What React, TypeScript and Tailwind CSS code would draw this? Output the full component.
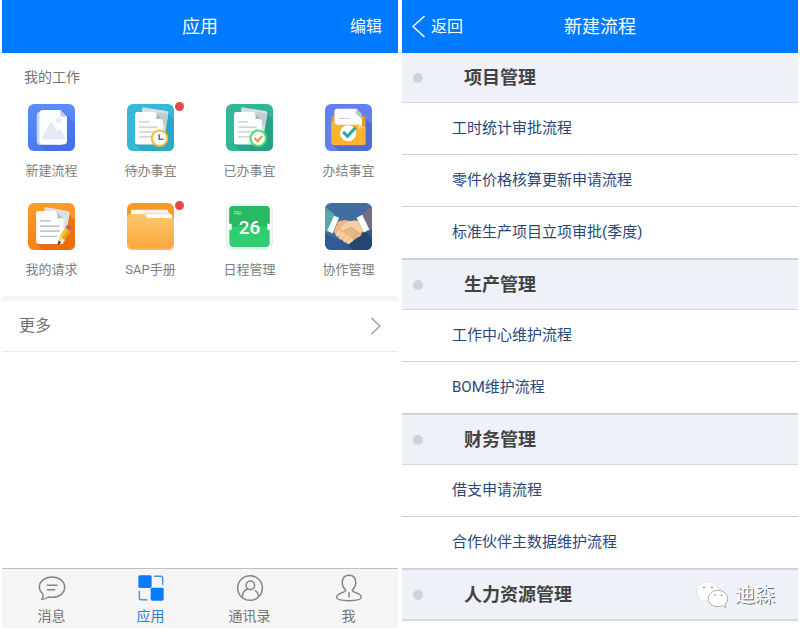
import React from 'react';

type IconProps = { children: React.ReactNode };

function Tile({ children }: IconProps) {
  return (
    <svg viewBox="0 0 140 140" className="size-[47px]" aria-hidden="true">
      {children}
    </svg>
  );
}

function NewFlowIcon() {
  return (
    <Tile>
      <defs>
        <linearGradient id="blueTile" x1="0" y1="0" x2="0" y2="1">
          <stop offset="0" stopColor="#5c8dfb" />
          <stop offset="1" stopColor="#4b76f2" />
        </linearGradient>
      </defs>
      <rect width="140" height="140" rx="18" fill="url(#blueTile)" />
      <path d="M100 20L140 58V122Q140 140 122 140H50L30 120Z" fill="#3f66de" opacity=".45" />
      <rect x="26" y="24" width="82" height="98" rx="10" fill="#c8d7fc" />
      <path d="M44 18H96L116 38V110Q116 120 106 120H44Q34 120 34 110V28Q34 18 44 18Z" fill="#fdfeff" />
      <path d="M96 18L116 38H102Q96 38 96 30Z" fill="#b9cbf8" />
      <circle cx="91" cy="49" r="8" fill="#e6ecf6" />
      <path d="M39 105L64 59Q68 53 73 59L87 82L92 76Q95 73 98 77L112 105Z" fill="#e4eaf3" />
    </Tile>
  );
}

function Papers() {
  return (
    <>
      <path d="M46 10L118 21Q124 23 123 29L109 114Q108 119 102 118L36 108Z" fill="#d8dfe4" />
      <path d="M90 24L122 29L116 66L109 60Z" fill="#c3ccd1" />
      <path d="M31 24H84L107 48V115Q107 121 101 121H31Q24 121 24 114V31Q24 24 31 24Z" fill="#fcfdfd" />
      <path d="M84 24Q91 33 87 45Q99 42 107 48Z" fill="#a8b1b5" />
      <path d="M36 53H66M36 69H91M36 83H91M36 98H76" stroke="#c2cacf" strokeWidth="3.5" />
    </>
  );
}

function TodoIcon() {
  return (
    <Tile>
      <rect width="140" height="140" rx="18" fill="#36b9d5" />
      <path d="M118 24L140 46V122Q140 140 122 140H44L24 120Z" fill="#249cb7" opacity=".6" />
      <Papers />
      <circle cx="97" cy="102" r="23" fill="#fff" stroke="#f5bb37" strokeWidth="6" />
      <path d="M96 90V105H109" fill="none" stroke="#6b7379" strokeWidth="5" />
    </Tile>
  );
}

function DoneIcon() {
  return (
    <Tile>
      <rect width="140" height="140" rx="18" fill="#31b797" />
      <path d="M118 24L140 46V122Q140 140 122 140H44L24 120Z" fill="#20957b" opacity=".6" />
      <Papers />
      <circle cx="96" cy="102" r="23" fill="#fff" stroke="#4bdd70" strokeWidth="6" />
      <path d="M85 101L94 111L108 95" fill="none" stroke="#f28a37" strokeWidth="5.5" />
    </Tile>
  );
}

function ClosedIcon() {
  return (
    <Tile>
      <rect width="140" height="140" rx="18" fill="#647ff2" />
      <path d="M109 30L140 62V122Q140 140 122 140H42L22 121Z" fill="#4461c5" opacity=".65" />
      <rect x="19" y="36" width="102" height="48" rx="7" fill="#e99b20" />
      <path d="M37 14H94L110 31V80H28V23Q28 14 37 14Z" fill="#fcfdfe" />
      <path d="M94 14L110 31Q112 39 109 44L92 28Z" fill="#bac2cb" />
      <path d="M41 43H74" stroke="#cbd2d9" strokeWidth="3.5" />
      <path d="M19 49L34 62H101L121 72V115Q121 123 113 123H28Q19 123 19 115Z" fill="#fbb431" />
      <path d="M97 59L121 71L99 74Z" fill="#ffd47b" />
      <circle cx="69" cy="87" r="24" fill="#fff" />
      <path d="M54 83L67 96L91 70" fill="none" stroke="#2aaa9d" strokeWidth="9" />
    </Tile>
  );
}

function RequestIcon() {
  return (
    <Tile>
      <defs>
        <linearGradient id="orangeTile" x1="0" y1="0" x2="0" y2="1">
          <stop offset="0" stopColor="#fb9d25" />
          <stop offset="1" stopColor="#fa7f16" />
        </linearGradient>
      </defs>
      <rect width="140" height="140" rx="18" fill="url(#orangeTile)" />
      <path d="M116 28L140 52V122Q140 140 122 140H44L24 120Z" fill="#e06004" opacity=".6" />
      <path d="M50 12L119 24Q125 26 124 32L109 114L40 108Z" fill="#dde1e4" />
      <path d="M31 24H84L106 48V116Q106 122 100 122H31Q24 122 24 115V31Q24 24 31 24Z" fill="#fcfdfd" />
      <path d="M84 24Q90 34 87 46Q98 43 106 48Z" fill="#b6bec3" />
      <path d="M36 53H67M36 69H94M36 84H94M36 99H88" stroke="#aeb7bf" strokeWidth="3.5" />
      <path d="M88 121L94 99L109 109Z" fill="#f5d6ab" />
      <path d="M94 99L111 74L127 84L109 109Z" fill="#f9c526" />
      <path d="M102 104L119 79L127 84L109 109Z" fill="#e79e19" />
      <path d="M111 74L115 67Q121 64 127 69Q132 74 130 79L127 84Z" fill="#dc5568" />
      <path d="M88 126L91 112L99 118Z" fill="#49372c" />
    </Tile>
  );
}

function FolderIcon() {
  return (
    <Tile>
      <defs>
        <linearGradient id="folderFront" x1="0" y1="0" x2="0" y2="1">
          <stop offset="0" stopColor="#fdc76c" />
          <stop offset="1" stopColor="#faa53b" />
        </linearGradient>
      </defs>
      <rect width="140" height="140" rx="18" fill="#f69a22" />
      <path d="M12 20H122V48H12Z" fill="#fffaf2" />
      <path d="M48 28H128V60H48Z" fill="#f6e5cb" />
      <path d="M57 34H135V60H57Z" fill="#fffdf9" />
      <path d="M0 42Q0 33 9 33H44Q52 33 57 40Q61 45 68 45H132Q140 45 140 53V122Q140 140 122 140H18Q0 140 0 122Z" fill="url(#folderFront)" />
      <path d="M2 122Q4 138 19 138H121Q136 138 138 122" fill="none" stroke="#ffc578" strokeWidth="3" />
    </Tile>
  );
}

function CalendarIcon() {
  return (
    <Tile>
      <rect width="140" height="140" rx="22" fill="#e7eeea" />
      <rect x="3" y="1" width="134" height="134" rx="20" fill="#f3f7f5" />
      <rect x="10" y="9" width="120" height="122" rx="12" fill="#2fce70" />
      <path d="M10 70V21Q10 9 22 9H118Q130 9 130 21V70Z" fill="#29b962" />
      <rect x="7" y="62" width="10" height="18" rx="2" fill="#fff" />
      <rect x="123" y="62" width="10" height="18" rx="2" fill="#fff" />
      <text x="24" y="35" fontSize="15" fill="#c5f2d4" fontFamily="Roboto, sans-serif">FRI</text>
      <text x="70" y="91" textAnchor="middle" fontSize="56" fontWeight="500" fill="#fff" fontFamily="Roboto, sans-serif">26</text>
    </Tile>
  );
}

function HandshakeIcon() {
  return (
    <Tile>
      <clipPath id="handTile"><rect width="140" height="140" rx="18" /></clipPath>
      <g clipPath="url(#handTile)">
        <rect width="140" height="140" fill="#426da3" />
        <path d="M0 90L65 120L140 55V140H0Z" fill="#315b91" />
        <path d="M65 122L120 85L140 106V140H82Z" fill="#24466f" />
        <path d="M0 12L30 35L12 88L0 82Z" fill="#58a6a6" />
        <path d="M140 10L108 36L128 85L140 78Z" fill="#736d82" />
        <path d="M27 38L42 44L22 91L7 82Z" fill="#fff" />
        <path d="M94 44L111 35L132 79L116 88Z" fill="#fff" />
        <path d="M39 55L59 51L83 56L111 86L106 98L93 105L80 116L66 120L43 105L25 86Z" fill="#e8b884" />
        <path d="M63 57Q80 50 98 53L115 85L103 88L79 72L57 83Q46 82 46 74Z" fill="#f6d0a2" />
        <path d="M57 83L79 72L104 92" fill="none" stroke="#dba673" strokeWidth="2.5" />
        <g stroke="#f7cfa0" strokeWidth="11" strokeLinecap="round">
          <path d="M37 94L43 87" />
          <path d="M47 103L55 93" />
          <path d="M59 111L67 101" />
          <path d="M70 117L77 110" />
        </g>
        <path d="M82 99L93 107M90 90L103 100" stroke="#d39c6b" strokeWidth="2" />
      </g>
    </Tile>
  );
}

const apps = [
  { label: '新建流程', Icon: NewFlowIcon },
  { label: '待办事宜', Icon: TodoIcon, unread: true },
  { label: '已办事宜', Icon: DoneIcon },
  { label: '办结事宜', Icon: ClosedIcon },
  { label: '我的请求', Icon: RequestIcon },
  { label: 'SAP手册', Icon: FolderIcon, unread: true },
  { label: '日程管理', Icon: CalendarIcon },
  { label: '协作管理', Icon: HandshakeIcon },
];

function TabIcon({ children }: IconProps) {
  return (
    <svg viewBox="0 0 84 84" className="size-7" fill="none" stroke="#858585" strokeWidth="4.5" strokeLinecap="round" strokeLinejoin="round" aria-hidden="true">
      {children}
    </svg>
  );
}

const tabs = [
  {
    label: '消息',
    icon: (
      <TabIcon>
        <path d="M11 76Q17 68 15 60Q4 52 4 40C4 22 21 9 42 9S80 22 80 40S63 70 42 70Q36 70 31 69Q22 76 11 76Z" />
        <path d="M28 34H57M28 47H50" />
      </TabIcon>
    ),
  },
  {
    label: '应用',
    active: true,
    icon: (
      <TabIcon>
        <rect x="4" y="4" width="40" height="38" rx="5" fill="#087cff" stroke="none" />
        <rect x="41" y="41" width="39" height="39" rx="5" fill="#087cff" stroke="none" />
        <path d="M51 7H72Q77 7 77 12V32M7 51V72Q7 77 12 77H31" stroke="#4c92dc" strokeLinecap="butt" />
      </TabIcon>
    ),
  },
  {
    label: '通讯录',
    icon: (
      <TabIcon>
        <circle cx="42" cy="42" r="37" />
        <circle cx="43" cy="34" r="13" />
        <path d="M19 69Q20 49 35 45M58 50Q66 55 67 64" />
      </TabIcon>
    ),
  },
  {
    label: '我',
    icon: (
      <TabIcon>
        <path d="M32 48Q20 36 22 24C23 9 32 4 42 4S61 9 62 24Q64 36 52 48C50 57 79 55 79 70C79 77 62 80 42 80S5 77 5 70C5 55 34 57 32 48Z" />
        <path d="M42 56V68" />
      </TabIcon>
    ),
  },
];

const sections = [
  { title: '项目管理', items: ['工时统计审批流程', '零件价格核算更新申请流程', '标准生产项目立项审批(季度)'] },
  { title: '生产管理', items: ['工作中心维护流程', 'BOM维护流程'] },
  { title: '财务管理', items: ['借支申请流程', '合作伙伴主数据维护流程'] },
  { title: '人力资源管理', items: [] },
];

function AppsScreen() {
  return (
    <section className="flex min-w-0 flex-1 flex-col bg-white" aria-label="应用">
      <header className="grid h-[53px] grid-cols-3 items-center bg-[#007aff] px-4 text-white">
        <h1 className="col-start-2 text-center text-lg">应用</h1>
        <button type="button" className="justify-self-end text-base">编辑</button>
      </header>
      <h2 className="px-[22px] pt-3 text-sm leading-6 text-[#747474]">我的工作</h2>
      <div className="grid grid-cols-4 gap-y-5 pt-[15px] pb-3.5">
        {apps.map(({ label, Icon, unread }) => (
          <button key={label} type="button" className="flex flex-col items-center gap-2">
            <span className="relative">
              <Icon />
              {unread && <span className="absolute -top-0.5 -right-2.5 size-[9px] rounded-full bg-[#e24a4b]" />}
            </span>
            <span className="text-[13px] leading-6 text-[#808080]">{label}</span>
          </button>
        ))}
      </div>
      <div className="h-[5px] bg-[#f5f5f5]" />
      <button type="button" className="flex h-[51px] items-center justify-between border-b border-[#ececec] px-[17px] text-base text-[#707070]">
        更多
        <svg viewBox="0 0 10 18" className="h-[18px] w-2.5" fill="none" stroke="#999" strokeWidth="1.3" aria-hidden="true">
          <path d="M0.5 1L9 9L0.5 17" />
        </svg>
      </button>
      <nav className="mt-auto grid h-[60px] grid-cols-4 border-t border-[#c0c0c0] bg-[#f5f5f5]">
        {tabs.map(({ label, icon, active }) => (
          <button key={label} type="button" className="flex flex-col items-center gap-0.5 pt-[5px]">
            {icon}
            <span className={active ? 'text-sm leading-6 text-[#2a7dd6]' : 'text-sm leading-6 text-[#757575]'}>{label}</span>
          </button>
        ))}
      </nav>
    </section>
  );
}

function NewFlowScreen() {
  return (
    <section className="min-w-0 flex-1 bg-white" aria-label="新建流程">
      <header className="grid h-[53px] grid-cols-3 items-center bg-[#007aff] px-2.5 text-white">
        <button type="button" className="flex items-center gap-1.5 text-base">
          <svg viewBox="0 0 13 23" className="h-[23px] w-[13px]" fill="none" stroke="currentColor" strokeWidth="1.5" aria-hidden="true">
            <path d="M12.5 1L1 11.5L12.5 22" />
          </svg>
          返回
        </button>
        <h1 className="text-center text-lg">新建流程</h1>
      </header>
      <div className="divide-y divide-[#d4d6dc]">
        {sections.map(({ title, items }) => (
          <div key={title}>
            <h2 className="flex h-[50px] items-center border-b border-[#d5d8df] bg-[#eef1f8] pl-[11px] text-lg font-bold text-[#434343]">
              <span className="mr-[41px] size-2.5 rounded-full bg-[#cfd3de]" />
              {title}
            </h2>
            <ul>
              {items.map((item) => (
                <li key={item}>
                  <a href="#" className="flex h-[52px] items-center border-b border-[#cfcfcf] pl-[50px] text-[15px] text-[#2b4779]">{item}</a>
                </li>
              ))}
            </ul>
          </div>
        ))}
        <div />
      </div>
    </section>
  );
}

function Watermark() {
  return (
    <div className="absolute right-[25px] bottom-5 flex items-center gap-[7px]">
      <svg viewBox="0 0 96 84" className="h-7 w-8" fill="#fff" strokeLinejoin="round" aria-hidden="true">
        <path d="M35 3C16 3 2 15 2 31C2 41 7 48 14 53L11 65L25 58Q34 61 43 58C57 56 68 45 68 31C68 15 54 3 35 3Z" stroke="#d3d6dd" strokeWidth="1.5" />
        <path d="M65 28C49 28 37 39 37 53S49 77 66 77Q73 77 79 74L90 80L87 69Q95 62 95 53C95 39 82 28 65 28Z" stroke="#83868d" strokeWidth="2" />
        <path d="M21 21Q25 15 28 21M45 21Q49 15 52 21M53 44Q56 39 59 44M74 44Q77 39 80 44" fill="none" stroke="#75777d" strokeWidth="3" />
      </svg>
      <span className="text-xl leading-7 text-white [text-shadow:1px_1px_0_#686868]">迪森</span>
    </div>
  );
}

export default function App() {
  return (
    <main className="relative flex min-h-screen gap-1 bg-white px-0.5 pb-px font-[Roboto,'Noto_Sans_CJK_SC',sans-serif]">
      <AppsScreen />
      <NewFlowScreen />
      <Watermark />
    </main>
  );
}
